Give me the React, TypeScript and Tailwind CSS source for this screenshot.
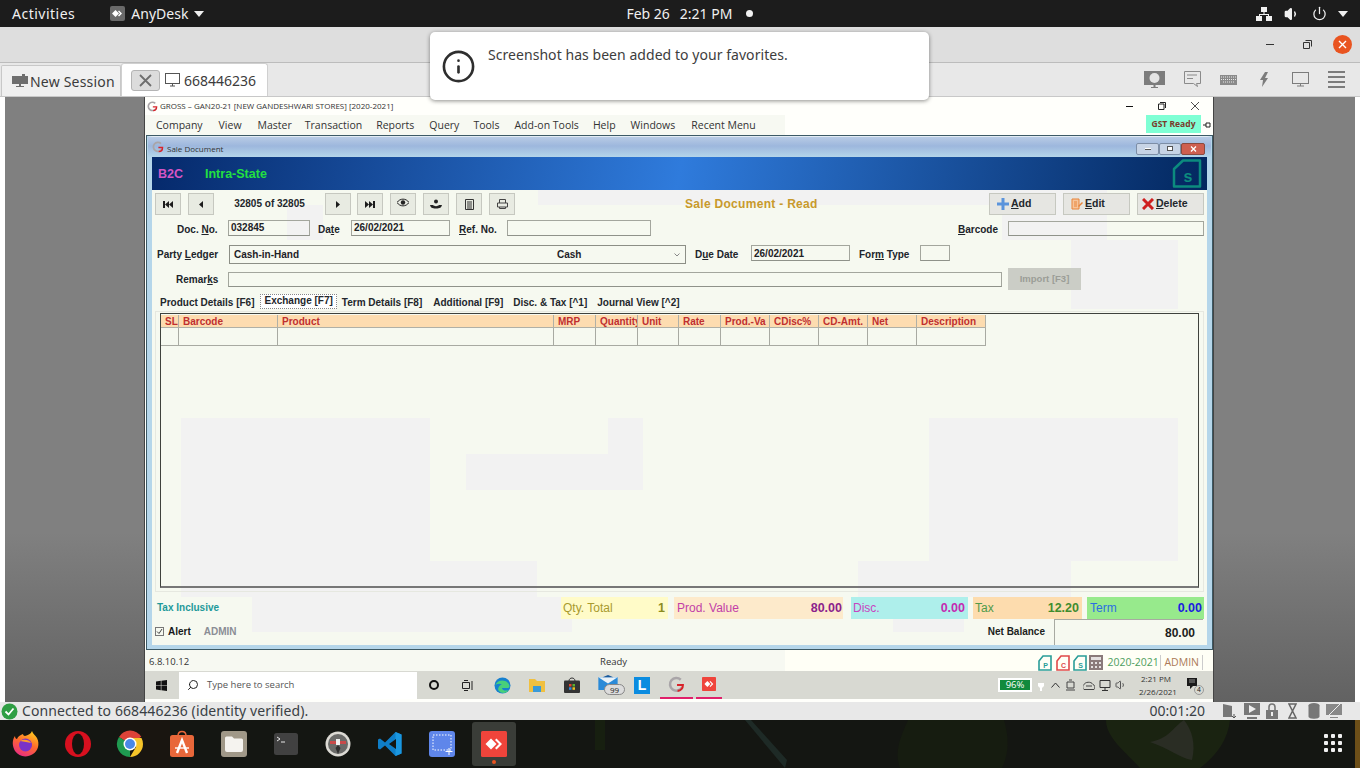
import React from "react";
import { Info, Volume1, Power, Search } from "lucide-react";

const U = ({ children }: { children: React.ReactNode }) => <span className="underline underline-offset-1">{children}</span>;

function Label({ w, children, ml = "" }: { w: string; children: React.ReactNode; ml?: string }) {
  return <div className={`${w} ${ml} shrink-0 text-[10px] font-bold text-[#20242a] whitespace-nowrap`}>{children}</div>;
}

function Field({ className, children }: { className: string; children?: React.ReactNode }) {
  return (
    <div className={`${className} shrink-0 border border-[#a3a69d] border-b-[#8f928a] text-[10px] font-bold text-[#1e2226] pl-[2px] leading-[13px] flex items-center`}>
      {children}
    </div>
  );
}

function NavBtn({ children }: { children: React.ReactNode }) {
  return <div className="w-[26px] h-[22px] shrink-0 bg-[#e8ebe2] border border-[#c6c8c0] flex items-center justify-center">{children}</div>;
}

const Tri = ({ d, w = 10 }: { d: string; w?: number }) => (
  <svg width={w} height="7" viewBox={`0 0 ${w} 7`}><path d={d} fill="#1c1c1c" /></svg>
);

function ActBtn({ icon, children, pad }: { icon: React.ReactNode; children: React.ReactNode; pad: string }) {
  return (
    <div className={`w-[67px] h-[22px] shrink-0 bg-[#e6e6e2] border border-[#c6c8c0] flex items-center ${pad} gap-[2px] text-[10.5px] font-bold text-[#23272c]`}>
      {icon}
      <span>{children}</span>
    </div>
  );
}

const cols: [string, string][] = [
  ["SL", "w-[18px]"],
  ["Barcode", "w-[99px]"],
  ["Product", "w-[276px]"],
  ["MRP", "w-[42px]"],
  ["Quantity", "w-[42px]"],
  ["Unit", "w-[41px]"],
  ["Rate", "w-[42px]"],
  ["Prod.-Va", "w-[49px]"],
  ["CDisc%", "w-[49px]"],
  ["CD-Amt.", "w-[49px]"],
  ["Net", "w-[49px]"],
  ["Description", "w-[69px]"],
];

function Total({ w, bg, label, value, lc, vc, mr, pad = "pl-[2px] pr-[3px]" }: { w: string; bg: string; label: string; value: string; lc: string; vc: string; mr: string; pad?: string }) {
  return (
    <div className={`${w} ${bg} ${mr} ${pad} h-[22px] shrink-0 flex items-center justify-between text-[12px]`}>
      <span className={lc}>{label}</span>
      <span className={`${vc} font-bold text-[12.5px]`}>{value}</span>
    </div>
  );
}

const Patch = ({ className }: { className: string }) => <div className={`absolute bg-[#f2f2f2] ${className}`} />;

function DocIcon({ color, letter }: { color: string; letter: string }) {
  return (
    <svg width="14" height="16" viewBox="0 0 14 16">
      <path d="M5 1h8v14H1V6z" fill="none" stroke={color} strokeWidth="1.6" />
      <text x="7.500" y="13" fontSize="7" fontWeight="bold" fill={color} textAnchor="middle" fontFamily="Liberation Sans">{letter}</text>
    </svg>
  );
}

function Firefox() {
  return (
    <svg width="28" height="28" viewBox="0 0 28 28">
      <defs>
        <linearGradient id="ff" x1="0.7" y1="0" x2="0.2" y2="1">
          <stop offset="0" stopColor="#ffc61e" />
          <stop offset="0.45" stopColor="#ff6b2c" />
          <stop offset="1" stopColor="#e8268a" />
        </linearGradient>
      </defs>
      <path d="M20 1c1 3 3 4 5 7 3 6 1 13-4 16-6 4-14 3-18-3C0 16 0 10 3 6c0 2 1 3 2 3 1-3 4-4 6-5 0 1 1 2 2 2 3-1 6-2 7-5z" fill="url(#ff)" />
      <circle cx="13.5" cy="15" r="6.5" fill="#7b32c8" />
      <path d="M8 11c3-2 9-2 11 2-3-1-7-1-11-2z" fill="#ff9a2e" />
    </svg>
  );
}

function Opera() {
  return (
    <svg width="28" height="28" viewBox="0 0 28 28">
      <circle cx="14" cy="14" r="13" fill="#d8101f" />
      <ellipse cx="14" cy="14" rx="6" ry="10.500" fill="#16140f" />
    </svg>
  );
}

function Chrome() {
  return (
    <svg width="28" height="28" viewBox="0 0 28 28">
      <path d="M14 14L3 7a13 13 0 0 1 22.3-.3z" fill="#dd4238" />
      <path d="M14 14v13A13 13 0 0 1 3 7z" fill="#1f9a50" />
      <path d="M14 8h11.5A13 13 0 0 1 27 14a13 13 0 0 1-13 13l6-10z" fill="#f6c429" />
      <circle cx="14" cy="14" r="6.5" fill="#fff" />
      <circle cx="14" cy="14" r="5" fill="#4a88e8" />
    </svg>
  );
}

function StoreIcon() {
  return (
    <svg width="26" height="28" viewBox="0 0 26 28">
      <path d="M9 6c0-6 8-6 8 0" fill="none" stroke="#e8673a" strokeWidth="1.5" />
      <rect x="1" y="5" width="24" height="22" rx="2.5" fill="#e8673a" />
      <path d="M8 23l5-13 5 13" fill="none" stroke="#fff" strokeWidth="2.4" />
      <path d="M6 18h14" stroke="#fff" strokeWidth="1.4" />
    </svg>
  );
}

function FilesIcon() {
  return (
    <svg width="26" height="26" viewBox="0 0 26 26">
      <rect width="26" height="26" rx="3" fill="#a09888" />
      <path d="M4 7a1.5 1.5 0 0 1 1.5-1.5H11l2 2h7.5A1.5 1.5 0 0 1 22 9v10a2 2 0 0 1-2 2H6a2 2 0 0 1-2-2z" fill="#f5f3ef" />
    </svg>
  );
}

function TermIcon() {
  return (
    <svg width="24" height="22" viewBox="0 0 24 22">
      <rect width="24" height="22" rx="2.5" fill="#414141" />
      <path d="M3 4l3 2-3 2M7 9h4" fill="none" stroke="#e8e8e8" strokeWidth="1" />
    </svg>
  );
}

function CompassIcon() {
  return (
    <svg width="26" height="26" viewBox="0 0 26 26">
      <circle cx="13" cy="13" r="12.5" fill="#dcdad4" />
      <circle cx="13" cy="13" r="10" fill="#6a6a68" />
      <path d="M5 10h16v3H5z" fill="#c94a4a" />
      <rect x="11" y="8" width="4" height="6" fill="#efefef" />
      <path d="M13 14l-2.5 3L13 23l2.5-6z" fill="#2f2f2f" />
    </svg>
  );
}

function VSCode() {
  return (
    <svg width="26" height="26" viewBox="0 0 26 26">
      <path d="M18.5 1L8 11.5 3 7.5 1 8.5v9l2 1 5-4 10.500 10.500 6-2.500V3.500zM19 8v10l-7-5z" fill="#0f7ec8" fillRule="evenodd" />
      <path d="M18.500 1l6 2.500v19l-6 2.500V18l.5 0V8l-.5 0z" fill="#1a97e0" />
    </svg>
  );
}

function ShotIcon() {
  return (
    <svg width="26" height="26" viewBox="0 0 26 26">
      <rect width="26" height="26" rx="3" fill="#5f86ea" />
      <rect x="4" y="4" width="18" height="15" fill="none" stroke="#fff" strokeWidth="1" strokeDasharray="1.500 1.500" />
      <path d="M20 17v7M16.500 20.500h7" stroke="#fff" strokeWidth="1" />
    </svg>
  );
}

function AnyDeskLogo({ size, bg }: { size: number; bg: string }) {
  return (
    <svg width={size} height={size} viewBox="0 0 26 26">
      <rect width="26" height="26" rx="1.500" fill={bg} />
      <path d="M10 7.500L15.500 13 10 18.500 4.500 13z" fill="#fff" />
      <path d="M15.500 7.500L21 13l-5.500 5.500-1.500-1.500 4-4-4-4z" fill="#fff" />
    </svg>
  );
}

function GLogo({ size }: { size: number }) {
  return (
    <svg width={size} height={size} viewBox="0 0 16 16">
      <path d="M12 3.500A6 6 0 1 0 13 11" fill="none" stroke="#a9a5a8" strokeWidth="2.400" />
      <path d="M8.500 8.500H14c0 3-2 5.500-5 5.500" fill="none" stroke="#d8232a" strokeWidth="2" />
    </svg>
  );
}

const SideGray = ({ className }: { className: string }) => (
  <div className={`${className} h-full shrink-0 border-[#444] bg-[linear-gradient(180deg,#808080_0%,#808080_72%,#626262_100%)]`} />
);

export default function App() {
  return (
    <div className="relative w-[1360px] h-[768px] overflow-hidden bg-[#14170f] font-['Noto_Sans',sans-serif] flex flex-col">
      {/* Ubuntu top bar */}
      <div className="h-[27px] shrink-0 bg-[#1c1c1c] flex items-center text-[#f0f0f0] text-[14px] relative">
        <span className="ml-[12px] tracking-[0.5px]">Activities</span>
        <div className="ml-[35px] w-[15px] h-[15px] rounded-[2px] bg-[#6a6a6a] flex items-center justify-center">
          <svg width="11" height="9" viewBox="0 0 11 9"><path d="M3.500 1L7 4.500 3.500 8 0 4.500z" fill="#fff" /><path d="M7 1.500L10 4.500 7 7.500 6 6.500l2-2-2-2z" fill="#fff" /></svg>
        </div>
        <span className="ml-[6px]">AnyDesk</span>
        <svg className="ml-[6px]" width="10" height="6" viewBox="0 0 10 6"><path d="M0 0h10L5 6z" fill="#f0f0f0" /></svg>
        <div className="ml-[422px] flex items-center">
          <span>Feb 26</span>
          <span className="ml-[10px]">2:21 PM</span>
          <span className="ml-[14px] w-[7px] h-[7px] rounded-full bg-[#f2f2f2]" />
        </div>
        <div className="ml-auto mr-[12px] flex items-center">
          <svg width="16" height="14" viewBox="0 0 16 14" fill="#f0f0f0"><rect x="5" y="0" width="6" height="5" /><rect x="0" y="9" width="6" height="5" /><rect x="10" y="9" width="6" height="5" /><path d="M7.500 5h1v2H13v2h-1V8H4v1H3V7h4.500z" /></svg>
          <Volume1 className="ml-[12px]" size={16} color="#f0f0f0" fill="#f0f0f0" />
          <Power className="ml-[12px]" size={15} color="#f0f0f0" />
          <svg className="ml-[11px]" width="10" height="6" viewBox="0 0 10 6"><path d="M0 0h10L5 6z" fill="#f0f0f0" /></svg>
        </div>
      </div>

      {/* AnyDesk title bar */}
      <div className="h-[36px] shrink-0 bg-[#dedede] border-b border-[#bcbcbc] flex items-center justify-end">
        <div className="w-[8px] h-[1px] bg-[#333]" />
        <svg className="ml-[29px]" width="9" height="9" viewBox="0 0 9 9"><path d="M2.500.500h6v6M.5 2.500h6v6h-6z" fill="none" stroke="#333" /></svg>
        <div className="ml-[21px] mr-[8px] w-[19px] h-[19px] rounded-full bg-[#e95420] flex items-center justify-center">
          <svg width="9" height="9" viewBox="0 0 9 9"><path d="M1 1l7 7M8 1l-7 7" stroke="#fff" strokeWidth="1.400" /></svg>
        </div>
      </div>

      {/* Tab bar */}
      <div className="h-[33px] shrink-0 bg-[#e8e8e8] flex items-end relative">
        <div className="ml-[1px] w-[120px] h-[31px] bg-[#f0f0f0] border border-[#c8c8c8] border-b-0 rounded-t-[2px] flex items-center pl-[10px] text-[14px] text-[#3c3c3c]">
          <svg width="16" height="14" viewBox="0 0 16 14"><path d="M0 2h10V0h3v2h3v8H9v2h3v1H4v-1h3v-2H0z" fill="#6e6e6e" /></svg>
          <span className="ml-[2px] tracking-[0.2px]">New Session</span>
        </div>
        <div className="w-[147px] h-[33px] bg-white border border-[#d0d0d0] border-b-0 rounded-t-[3px] flex items-center pl-[9px] text-[14px] text-[#3c3c3c]">
          <div className="w-[29px] h-[21px] rounded-[3px] bg-[#dcdcdc] border border-[#b4b4b4] flex items-center justify-center">
            <svg width="13" height="13" viewBox="0 0 13 13"><path d="M1 1l11 11M12 1L1 12" stroke="#6e6e6e" strokeWidth="1.800" /></svg>
          </div>
          <svg className="ml-[5px]" width="15" height="14" viewBox="0 0 15 14"><rect x="0.500" y="0.500" width="14" height="10" fill="none" stroke="#555" /><path d="M5 13h5M7.500 11v2" stroke="#555" /></svg>
          <span className="ml-[4px]">668446236</span>
        </div>
        <div className="ml-auto mr-[15px] h-[33px] flex items-center">
          <svg width="21" height="18" viewBox="0 0 21 18"><rect width="21" height="14" fill="#7c7c7c" /><circle cx="10.500" cy="7" r="5" fill="#e4e4e4" /><path d="M9.500 14h2v2H14v1H7v-1h2.500z" fill="#7c7c7c" /></svg>
          <svg className="ml-[19px]" width="17" height="17" viewBox="0 0 17 17"><path d="M.5.500h16v12h-4l1 3-4-3H.5z" fill="none" stroke="#8a8a8a" /><path d="M3 4h10M3 7.500h6" stroke="#8a8a8a" /></svg>
          <svg className="ml-[19px]" width="17" height="10" viewBox="0 0 17 10"><rect width="17" height="10" fill="#8a8a8a" /><path d="M1 2h15M1 4.500h15M3 7h11" stroke="#e8e8e8" strokeDasharray="1 1" /></svg>
          <svg className="ml-[22px]" width="10" height="15" viewBox="0 0 10 15"><path d="M6 0L1 8h3l-1 7 6-9H6l3-6z" fill="#7c7c7c" /></svg>
          <svg className="ml-[23px]" width="17" height="15" viewBox="0 0 17 15"><rect x=".5" y=".5" width="16" height="11" fill="none" stroke="#7c7c7c" /><path d="M8.500 12v2M5 14h7" stroke="#7c7c7c" /></svg>
          <div className="ml-[19px] w-[17px] flex flex-col gap-[3px]">
            <div className="h-[2px] bg-[#7c7c7c]" /><div className="h-[2px] bg-[#7c7c7c]" /><div className="h-[2px] bg-[#7c7c7c]" /><div className="h-[2px] bg-[#7c7c7c]" />
          </div>
        </div>
      </div>

      {/* Remote view */}
      <div className="h-[606px] shrink-0 bg-white flex border-t border-[#c8c8c8] px-[5px]">
        <SideGray className="w-[140px] border-r" />
        <div className="w-[1068px] shrink-0 h-full flex flex-col bg-[#fffffb] font-['Liberation_Sans',sans-serif]">
          <div className="h-[18px] shrink-0 flex items-center pl-[2px] text-[8px] text-[#333] font-['Open_Sans',sans-serif] relative">
            <GLogo size={11} />
            <span className="ml-[2px]">GROSS – GAN20-21 [NEW GANDESHWARI STORES] [2020-2021]</span>
            <div className="ml-auto flex items-center mr-[14px]">
              <div className="w-[7px] h-[1px] bg-[#111]" />
              <svg className="ml-[25px]" width="8" height="8" viewBox="0 0 8 8"><path d="M2 .5h5.500V6M.5 2h5.500v5.500H.5z" fill="none" stroke="#222" /></svg>
              <svg className="ml-[25px]" width="8" height="8" viewBox="0 0 8 8"><path d="M0 0l8 8M8 0L0 8" stroke="#222" strokeWidth=".8" /></svg>
            </div>
          </div>
          <div className="h-[20px] shrink-0 flex items-center text-[10.500px] text-[#333] font-['Open_Sans',sans-serif] bg-[linear-gradient(90deg,#f7f9f2_640px,#fffffb_640px)]">
            <span className="ml-[11px] mt-[2px]">Company</span>
            <span className="ml-[16px] mt-[2px]">View</span>
            <span className="ml-[16px] mt-[2px]">Master</span>
            <span className="ml-[13px] mt-[2px]">Transaction</span>
            <span className="ml-[14px] mt-[2px]">Reports</span>
            <span className="ml-[15px] mt-[2px]">Query</span>
            <span className="ml-[14px] mt-[2px]">Tools</span>
            <span className="ml-[15px] mt-[2px]">Add-on Tools</span>
            <span className="ml-[14px] mt-[2px]">Help</span>
            <span className="ml-[15px] mt-[2px]">Windows</span>
            <span className="ml-[16px] mt-[2px]">Recent Menu</span>
            <div className="ml-auto mb-[2px] w-[55px] h-[18px] bg-[#7fffd4] text-[#7a3a2a] text-[8.500px] font-bold flex items-center justify-center">GST Ready</div>
            <svg className="mx-[2px]" width="8" height="6" viewBox="0 0 8 6"><path d="M0 3h3M3 1h4v4H3z" fill="none" stroke="#222" /></svg>
          </div>

          {/* Sale document window */}
          <div className="h-[515px] shrink-0 ml-[1px] border border-[#3d5a66] flex flex-col">
            <div className="h-full border-t border-x-[5px] border-b-[4px] border-t-[#e2ecf4] border-x-[#b5d6ea] border-b-[#b5d6ea] bg-[#f6f9f0] relative flex flex-col">
              <Patch className="left-[386px] top-[53px] w-[569px] h-[15px]" />
              <Patch className="left-[135px] top-[68px] w-[36px] h-[35px]" />
              <Patch className="left-[850px] top-[68px] w-[105px] h-[35px]" />
              <Patch className="left-[919px] top-[103px] w-[107px] h-[69px]" />
              <Patch className="left-[29px] top-[281px] w-[249px] h-[143px]" />
              <Patch className="left-[29px] top-[424px] w-[356px] h-[36px]" />
              <Patch className="left-[100px] top-[460px] w-[320px] h-[35px]" />
              <Patch className="left-[314px] top-[317px] w-[177px] h-[36px]" />
              <Patch className="left-[456px] top-[281px] w-[35px] h-[36px]" />
              <Patch className="left-[777px] top-[281px] w-[249px] h-[143px]" />
              <Patch className="left-[706px] top-[424px] w-[213px] h-[36px]" />
              <Patch className="left-[741px] top-[481px] w-[71px] h-[14px]" />
              <div className="absolute left-[3px] top-[174px] w-[1049px] h-[281px] border border-[#e6e8e0]" />

              <div className="relative flex flex-col h-full">
                <div className="h-[20px] shrink-0 -mx-[4px] bg-[linear-gradient(180deg,#b8cbe5_0%,#9db7dd_45%,#b4d5ea_100%)] flex items-center pl-[4px] text-[8px] text-[#333] font-['Open_Sans',sans-serif]">
                  <GLogo size={12} />
                  <span className="ml-[3px] mt-[4px]">Sale Document</span>
                  <div className="ml-auto mr-[6px] mt-[3px] flex">
                    <div className="w-[23px] h-[12px] border border-[#7d8ea6] bg-[#c7d4e6] rounded-[2px] flex items-center justify-center"><div className="w-[6px] h-[2px] bg-white border-b border-[#555]" /></div>
                    <div className="w-[22px] h-[12px] border border-[#7d8ea6] bg-[#c7d4e6] rounded-[2px] flex items-center justify-center"><div className="w-[6px] h-[5px] border border-[#555] bg-white" /></div>
                    <div className="w-[24px] h-[12px] border border-[#8a4a40] bg-[#cf5f50] rounded-[2px] flex items-center justify-center">
                      <svg width="7" height="6" viewBox="0 0 7 6"><path d="M1 .5l5 5M6 .5l-5 5" stroke="#fff" strokeWidth="1.300" /></svg>
                    </div>
                  </div>
                </div>
                <div className="h-[33px] shrink-0 bg-[linear-gradient(100deg,#05296b_0%,#2f7bdc_50%,#03275f_100%)] flex items-center text-[12.500px] font-bold">
                  <span className="ml-[6px] mt-[1px] text-[#d455c4]">B2C</span>
                  <span className="ml-[22px] mt-[1px] text-[#22e040]">Intra-State</span>
                  <svg className="ml-auto mr-[5px]" width="30" height="29" viewBox="0 0 30 29">
                    <path d="M11 1.500h17v26H2V10z" fill="none" stroke="#0c8b7e" strokeWidth="2.500" strokeLinejoin="round" />
                    <text x="16" y="23" fontSize="16" fontWeight="bold" fill="#0c8b7e" textAnchor="middle" fontFamily="Liberation Sans">s</text>
                  </svg>
                </div>

                {/* Toolbar */}
                <div className="h-[28px] shrink-0 flex items-start pl-[3px] pt-[3px]">
                  <NavBtn><Tri w={10} d="M0 0h2v7H0zM6 0v7L2 3.500zM10 0v7L6 3.500z" /></NavBtn>
                  <div className="ml-[7px]"><NavBtn><Tri w={4} d="M4 0v7L0 3.500z" /></NavBtn></div>
                  <div className="w-[111px] h-[22px] leading-[22px] text-center text-[10px] font-bold text-[#23272c]">32805 of 32805</div>
                  <NavBtn><Tri w={4} d="M0 0v7l4-3.500z" /></NavBtn>
                  <div className="ml-[6px]"><NavBtn><Tri w={10} d="M0 0v7l4-3.500zM4 0v7l4-3.500zM8 0h2v7H8z" /></NavBtn></div>
                  <div className="ml-[7px]">
                    <NavBtn>
                      <svg className="-mt-[4px]" width="12" height="9" viewBox="0 0 12 9"><path d="M0 4.500C3 0 9 0 12 4.500 9 9 3 9 0 4.500z" fill="none" stroke="#222" /><circle cx="6" cy="4.500" r="2.200" fill="#222" /></svg>
                    </NavBtn>
                  </div>
                  <div className="ml-[7px]">
                    <NavBtn>
                      <svg width="12" height="10" viewBox="0 0 12 10"><circle cx="6" cy="2.500" r="2" fill="#222" /><path d="M0 6h3c1 1.500 5 1.500 6 0h3c-.5 2.500-2 3.500-6 3.500S.5 8.500 0 6z" fill="#222" /></svg>
                    </NavBtn>
                  </div>
                  <div className="ml-[7px]">
                    <NavBtn>
                      <svg width="9" height="11" viewBox="0 0 9 11"><path d="M.5.500h8v10h-8zM2 3h5M2 5h5M2 7h5M2 9h5" fill="none" stroke="#333" /></svg>
                    </NavBtn>
                  </div>
                  <div className="ml-[7px]">
                    <NavBtn>
                      <svg width="11" height="10" viewBox="0 0 11 10"><path d="M2.500 4V.5h6V4M.5 4h10v4h-10zM2.500 8v1.500h6V8" fill="none" stroke="#444" /></svg>
                    </NavBtn>
                  </div>
                  <div className="ml-[170px] w-[134px] h-[22px] leading-[23px] text-[12px] tracking-[0.3px] font-bold text-[#c89a2b] whitespace-nowrap">Sale Document - Read</div>
                  <div className="ml-auto flex mr-[3px]">
                    <ActBtn pad="pl-[7px]" icon={<svg width="12" height="12" viewBox="0 0 12 12"><path d="M4.500 0h3v4.500H12v3H7.500V12h-3V7.500H0v-3h4.500z" fill="#5b94dc" /></svg>}><U>A</U>dd</ActBtn>
                    <div className="ml-[7px]">
                      <ActBtn pad="pl-[7px]" icon={<svg width="12" height="12" viewBox="0 0 12 12"><path d="M1 1h7v10H1zM3 4h3M3 6h3M3 8h3" fill="#f6c49a" stroke="#e8843a" /><path d="M7 8l4-4 1 1-4 4z" fill="#e8843a" /></svg>}><U>E</U>dit</ActBtn>
                    </div>
                    <div className="ml-[7px]">
                      <ActBtn pad="pl-[4px]" icon={<svg width="12" height="12" viewBox="0 0 12 12"><path d="M1 1l10 10M11 1L1 11" stroke="#cf1f1f" strokeWidth="3" /></svg>}><U>D</U>elete</ActBtn>
                    </div>
                  </div>
                </div>

                {/* Doc row */}
                <div className="h-[16px] mt-[2px] shrink-0 flex items-center">
                  <Label w="w-[42px]" ml="ml-[25px] mt-[2px]">Doc. <U>N</U>o.</Label>
                  <Field className="ml-[9px] w-[82px] h-[16px] pb-[2px]">032845</Field>
                  <Label w="w-[24px]" ml="ml-[8px] mt-[2px]">Da<U>t</U>e</Label>
                  <Field className="ml-[9px] w-[99px] h-[16px] pb-[2px]">26/02/2021</Field>
                  <Label w="w-[40px]" ml="ml-[9px] mt-[2px]"><U>R</U>ef. No.</Label>
                  <Field className="ml-[8px] w-[144px] h-[16px]" />
                  <Label w="w-[42px]" ml="ml-[307px] mt-[2px]"><U>B</U>arcode</Label>
                  <Field className="ml-[8px] w-[196px] h-[15px]" />
                </div>

                {/* Party row */}
                <div className="h-[19px] mt-[9px] shrink-0 flex items-center">
                  <Label w="w-[64px]" ml="ml-[5px]">Party <U>L</U>edger</Label>
                  <div className="ml-[8px] w-[457px] h-[19px] shrink-0 border border-[#8c8f86] flex items-center text-[10px] font-bold text-[#1e2226] pl-[4px] relative">
                    <span>Cash-in-Hand</span>
                    <span className="ml-[258px]">Cash</span>
                    <svg className="ml-auto mr-[5px]" width="6" height="4" viewBox="0 0 6 4"><path d="M.5.500L3 3 5.500.500" fill="none" stroke="#888" /></svg>
                  </div>
                  <Label w="w-[47px]" ml="ml-[9px]">D<U>u</U>e Date</Label>
                  <Field className="ml-[9px] -mt-[3px] w-[99px] h-[16px]">26/02/2021</Field>
                  <Label w="w-[54px]" ml="ml-[9px]">For<U>m</U> Type</Label>
                  <Field className="ml-[7px] -mt-[3px] w-[30px] h-[16px]" />
                </div>

                {/* Remarks row */}
                <div className="h-[22px] mt-[4px] shrink-0 flex items-center">
                  <Label w="w-[44px]" ml="ml-[24px]">Remar<U>k</U>s</Label>
                  <Field className="ml-[8px] w-[774px] h-[15px]" />
                  <div className="ml-[6px] w-[73px] h-[22px] bg-[#cbcdc6] text-[#9b9d97] text-[9.500px] font-bold flex items-center justify-center">Import [F3]</div>
                </div>

                {/* Tabs */}
                <div className="h-[17px] mt-[4px] shrink-0 flex items-center pl-[8px] text-[10px] font-bold text-[#23272c] whitespace-nowrap">
                  <span>Product Details [F6]</span>
                  <span className="ml-[6px] bg-white border border-dotted border-[#888] px-[3px] h-[15px] -mt-[2px] leading-[12px]">Exchange [F7]</span>
                  <span className="ml-[5px]">Term Details [F8]</span>
                  <span className="ml-[11px]">Additional [F9]</span>
                  <span className="ml-[10px]">Disc. &amp; Tax [^1]</span>
                  <span className="ml-[10px]">Journal View [^2]</span>
                </div>

                {/* Grid */}
                <div className="mt-[2px] ml-[8px] mr-[8px] h-[275px] shrink-0 border border-[#3f423d] border-b-2 border-b-[#777] pt-[1px] overflow-hidden">
                  <div className="flex h-[13px]">
                    {cols.map(([name, w]) => (
                      <div key={name} className={`${w} shrink-0 bg-[#fddcb0] border-r border-[#b0b0a6] border-b text-[10px] font-bold text-[#c02f2f] pl-[4px] leading-[14px] overflow-hidden whitespace-nowrap`}>
                        {name}
                      </div>
                    ))}
                  </div>
                  <div className="flex h-[18px]">
                    {cols.map(([name, w]) => (
                      <div key={name} className={`${w} shrink-0 border-r border-b border-[#a8aaa2]`} />
                    ))}
                  </div>
                </div>

                {/* Totals */}
                <div className="h-[22px] mt-[9px] shrink-0 flex items-center">
                  <span className="ml-[5px] -mt-[2px] text-[10px] font-bold text-[#1f9a9a]">Tax Inclusive</span>
                  <div className="ml-auto flex mr-[3px]">
                    <Total w="w-[107px]" bg="bg-[#fffbc8]" mr="mr-[6px]" label="Qty. Total" value="1" lc="text-[#a89a2e]" vc="text-[#8c8c1f]" />
                    <Total w="w-[169px]" bg="bg-[#fdeacb]" mr="mr-[8px]" pad="pl-[3px] pr-[1px]" label="Prod. Value" value="80.00" lc="text-[#c23ea8]" vc="text-[#8c1f8c]" />
                    <Total w="w-[117px]" bg="bg-[#aeefeb]" mr="mr-[5px]" label="Disc." value="0.00" lc="text-[#c844c0]" vc="text-[#c42ab0]" />
                    <Total w="w-[109px]" bg="bg-[#fddcae]" mr="mr-[5px]" label="Tax" value="12.20" lc="text-[#4f9a4a]" vc="text-[#3f8c2e]" />
                    <Total w="w-[117px]" bg="bg-[#97ea8c]" mr="" pad="pl-[3px] pr-[2px]" label="Term" value="0.00" lc="text-[#2b6fe0]" vc="text-[#1c1ce0]" />
                  </div>
                </div>

                {/* Bottom */}
                <div className="h-[26px] shrink-0 flex items-center">
                  <div className="ml-[3px] -mt-[2px] w-[9px] h-[9px] border border-[#777] flex items-center justify-center">
                    <svg width="7" height="7" viewBox="0 0 7 7"><path d="M1 3.500L3 5.500 6 1" fill="none" stroke="#444" /></svg>
                  </div>
                  <span className="ml-[4px] -mt-[2px] text-[10px] font-bold text-[#16181a]">Alert</span>
                  <span className="ml-[13px] -mt-[2px] text-[10px] font-bold text-[#8a8d95]">ADMIN</span>
                  <span className="ml-auto -mt-[2px] text-[10px] font-bold text-[#1c1e20]">Net Balance</span>
                  <div className="ml-[9px] mr-[4px] w-[149px] h-[26px] border-l border-t border-[#a8aaa2] flex items-center justify-end pr-[8px] text-[12px] font-bold text-[#1c1e20]">80.00</div>
                </div>
              </div>
            </div>
          </div>

          {/* App status */}
          <div className="h-[21px] shrink-0 flex items-center pt-[4px] text-[9.500px] text-[#333] font-['Open_Sans',sans-serif] bg-[linear-gradient(90deg,#f7f9f2_640px,#fffff6_640px)]">
            <span className="ml-[4px]">6.8.10.12</span>
            <span className="ml-[411px]">Ready</span>
            <div className="ml-auto mr-[10px] flex items-center">
              <DocIcon color="#2a9d98" letter="P" />
              <span className="ml-[4px]"><DocIcon color="#e04a4a" letter="C" /></span>
              <span className="ml-[3px]"><DocIcon color="#2a9d98" letter="S" /></span>
              <svg className="ml-[2px]" width="14" height="15" viewBox="0 0 14 15"><rect width="14" height="15" fill="#8a7a7a" /><rect x="2" y="2" width="10" height="3" fill="#e4e0e0" /><path d="M2 7h2v2H2zM6 7h2v2H6zM10 7h2v2h-2zM2 11h2v2H2zM6 11h2v2H6zM10 11h2v2h-2z" fill="#e4e0e0" /></svg>
              <span className="ml-[4px] text-[#4e9e5e] text-[10.500px] w-[54px] border-r border-[#ccc]">2020-2021</span>
              <span className="ml-[3px] text-[#ab7a58] text-[10.500px] pr-[3px] border-r border-[#ccc]">ADMIN</span>
            </div>
          </div>

          {/* Windows taskbar */}
          <div className="h-[28px] shrink-0 bg-[#d8d9d2] flex items-center relative">
            <svg className="ml-[11px]" width="11" height="11" viewBox="0 0 11 11" fill="#111"><path d="M0 1.500L4.800.8v4.400H0zM5.400.7L11 0v5.200H5.400zM0 5.800h4.800v4.400L0 9.500zM5.400 5.800H11V11l-5.600-.8z" /></svg>
            <div className="ml-[12px] w-[238px] h-[27px] bg-white flex items-center pl-[8px] text-[9.500px] text-[#555] font-['Open_Sans',sans-serif]">
              <Search size={12} color="#222" className="-scale-x-100" />
              <span className="ml-[8px]">Type here to search</span>
            </div>
            <div className="ml-[12px] w-[10px] h-[10px] rounded-full border-2 border-[#111]" />
            <svg className="ml-[23px]" width="12" height="11" viewBox="0 0 12 11"><path d="M.5 2.500h7v6h-7zM2 .5h4M2 10.500h4M10 1v9" fill="none" stroke="#222" /></svg>
            <svg className="ml-[20px]" width="17" height="17" viewBox="0 0 17 17"><circle cx="8.500" cy="8.500" r="8" fill="#1680cf" /><path d="M1 9c2-6 9-7 13-3 2 2 2 5 0 5H8c0 2 3 3.500 7 2-3 4-8 3.500-10 1C3 12 5 8 8 7.500 5 6 2 7 1 9z" fill="#48d07a" /></svg>
            <svg className="ml-[18px]" width="16" height="14" viewBox="0 0 16 14"><path d="M0 1h6l2 2h8v11H0z" fill="#f0c040" /><rect x="4" y="8" width="8" height="6" fill="#3a9ad8" /></svg>
            <svg className="ml-[19px]" width="16" height="16" viewBox="0 0 16 16"><path d="M5 4c0-4 6-4 6 0" fill="none" stroke="#333" /><rect y="3.500" width="16" height="12.500" rx="1" fill="#333" /><rect x="5" y="7" width="2.500" height="2.500" fill="#e8442a" /><rect x="8.500" y="7" width="2.500" height="2.500" fill="#5ab030" /><rect x="5" y="10.300" width="2.500" height="2.500" fill="#2a8ae0" /><rect x="8.500" y="10.300" width="2.500" height="2.500" fill="#f0c020" /></svg>
            <div className="ml-[18px] relative w-[27px] h-[20px]">
              <svg width="20" height="15" viewBox="0 0 18 14"><rect y="2" width="18" height="12" fill="#2a8ad8" /><path d="M0 2l9 6 9-6" fill="#eaf2f8" /><path d="M4 2l5-2 5 2" fill="#1a5a9c" /></svg>
              <div className="absolute right-0 bottom-0 w-[21px] h-[11px] rounded-full border border-[#888] bg-[#dcdcdc] text-[8px] leading-[9px] text-center text-[#222] font-['Open_Sans',sans-serif]">99</div>
            </div>
            <div className="ml-[9px] w-[16px] h-[17px] bg-[#0b8ce0] flex items-center justify-center text-white text-[14px] font-bold">L</div>
            <div className="ml-[10px] w-[33px] h-[28px] flex items-center justify-center border-b-2 border-[#e0206a]"><GLogo size={17} /></div>
            <div className="ml-[3px] w-[26px] h-[28px] flex items-center justify-center border-b-2 border-[#e0206a]"><AnyDeskLogo size={14} bg="#ef443b" /></div>
            <div className="ml-[276px] w-[34px] h-[14px] bg-[#118a3c] border-2 border-white text-white text-[9.500px] leading-[10px] text-center font-['Open_Sans',sans-serif]">96%</div>
            <svg className="ml-[6px]" width="6" height="11" viewBox="0 0 6 11"><path d="M1 0v3M5 0v3M0 3h6v3L4 8v3H2V8L0 6z" fill="#fff" /></svg>
            <svg className="ml-[7px]" width="9" height="6" viewBox="0 0 9 6"><path d="M.5 5.500L4.500 1l4 4.500" fill="none" stroke="#333" /></svg>
            <svg className="ml-[6px]" width="9" height="12" viewBox="0 0 9 12"><path d="M1 3h7v6H1zM3 1h3M0 11h9" fill="none" stroke="#444" /></svg>
            <svg className="ml-[8px]" width="12" height="9" viewBox="0 0 12 9"><path d="M1 8.500a3 3 0 0 1 0-5C2 1 8 0 10 3.500a3 3 0 0 1 1 5z" fill="none" stroke="#444" /><path d="M3 5h6" stroke="#444" /></svg>
            <svg className="ml-[4px]" width="12" height="11" viewBox="0 0 12 11"><path d="M1 .5h10v7H1zM6 8v2M3 10.500h6" fill="none" stroke="#333" /></svg>
            <Volume1 className="ml-[4px]" size={12} color="#555" />
            <div className="ml-[12px] w-[34px] text-center text-[8px] leading-[13px] text-[#333] font-['Open_Sans',sans-serif] whitespace-nowrap">
              <div>2:21 PM</div>
              <div>2/26/2021</div>
            </div>
            <div className="ml-[14px] relative w-[14px] h-[14px]">
              <svg width="10" height="11" viewBox="0 0 10 11"><path d="M0 0h10v8H6l-3 3V8H0z" fill="#1a1a1a" /><path d="M2 2h6M2 4h6" stroke="#ddd" strokeWidth=".6" /></svg>
              <div className="absolute right-[-3px] bottom-[-3px] w-[10px] h-[10px] rounded-full border border-[#999] bg-[#d8d9d2] text-[7px] leading-[8px] text-center text-[#222]">4</div>
            </div>
          </div>
        </div>
        <SideGray className="w-[142px] border-l" />
      </div>

      {/* Connection status */}
      <div className="h-[18px] shrink-0 bg-[#e8e8e8] flex items-center text-[#3a3f45] text-[14px]">
        <svg className="ml-[1px]" width="17" height="17" viewBox="0 0 17 17"><circle cx="8.500" cy="8.500" r="8" fill="#2f9e44" /><path d="M4.500 8.500l3 3 5-6" fill="none" stroke="#fff" strokeWidth="1.800" /></svg>
        <span className="ml-[4px] -mt-[2px] tracking-[0.1px]">Connected to 668446236 (identity verified).</span>
        <span className="ml-auto -mt-[1px] text-[14px]">00:01:20</span>
        <div className="ml-[18px] mr-[18px] flex items-center">
          <svg width="14" height="16" viewBox="0 0 14 16"><path d="M0 1l9 2v11H0z" fill="#777" /><path d="M11 11v4M9 13l2 2 2-2" fill="none" stroke="#555" /></svg>
          <svg className="ml-[6px]" width="18" height="16" viewBox="0 0 16 16"><rect width="16" height="12" fill="#777" /><path d="M5 2l7 4-7 4z" fill="#eee" /><path d="M3 15h10" stroke="#777" strokeWidth="2" /></svg>
          <svg className="ml-[5px]" width="12" height="16" viewBox="0 0 12 16"><path d="M3 7V4a3 3 0 0 1 6 0v3" fill="none" stroke="#777" strokeWidth="1.600" /><rect y="7" width="12" height="9" fill="#777" /><rect x="5" y="9" width="2" height="4" fill="#eee" /></svg>
          <svg className="ml-[10px]" width="9" height="16" viewBox="0 0 9 16"><path d="M1 1h7L1 15h7z" fill="none" stroke="#666" strokeWidth="1.500" /></svg>
          <svg className="ml-[11px]" width="12" height="16" viewBox="0 0 12 16"><ellipse cx="6" cy="2.500" rx="5.500" ry="2.500" fill="#777" /><path d="M.5 2.500v11c0 3 11 3 11 0v-11z" fill="#777" /></svg>
          <svg className="ml-[6px]" width="16" height="16" viewBox="0 0 16 16"><rect y="1" width="16" height="11" fill="#888" /><path d="M3 14h10M14 1L3 12" stroke="#eee" /><path d="M4 14.500h8" stroke="#888" /></svg>
        </div>
      </div>

      {/* Dock */}
      <div className="h-[48px] shrink-0 relative bg-[#141612] flex items-center">
        <svg className="absolute inset-0" width="1360" height="48" viewBox="0 0 1360 48">
          <rect x="120" y="0" width="50" height="48" fill="#191510" />
          <rect x="595" y="0" width="10" height="30" fill="#171f10" />
          <path d="M745 0l6 0 36 40-2 8z" fill="#1e2a26" />
          <path d="M900 48c-6-16 0-30 8-48h96c6 20 4 36-2 48z" fill="#161c10" />
          <path d="M1106 0h124c-2 20-14 36-30 48h-60c-14-16-34-30-34-48z" fill="#1a2311" />
          <path d="M1150 22c20-4 22-14 34-22 8 10 12 24 8 40-12-2-24-12-42-18z" fill="#2a2d24" />
          <rect x="1355" y="0" width="5" height="48" fill="#6d4f18" />
        </svg>
        <div className="relative ml-[12px] w-[28px] flex justify-center"><Firefox /></div>
        <div className="relative ml-[24px] w-[28px] flex justify-center"><Opera /></div>
        <div className="relative ml-[24px] w-[28px] flex justify-center"><Chrome /></div>
        <div className="relative ml-[24px] w-[28px] flex justify-center"><StoreIcon /></div>
        <div className="relative ml-[24px] w-[28px] flex justify-center"><FilesIcon /></div>
        <div className="relative ml-[24px] w-[28px] flex justify-center"><TermIcon /></div>
        <div className="relative ml-[24px] w-[28px] flex justify-center"><CompassIcon /></div>
        <div className="relative ml-[24px] w-[28px] flex justify-center"><VSCode /></div>
        <div className="relative ml-[24px] w-[28px] flex justify-center"><ShotIcon /></div>
        <div className="ml-[16px] w-[44px] h-[44px] rounded-[3px] bg-[#3a3d38] relative flex items-center justify-center">
          <AnyDeskLogo size={26} bg="#ef443b" />
          <div className="absolute bottom-[2px] left-[20px] w-[4px] h-[4px] rounded-full bg-[#e95420]" />
        </div>
        <div className="relative ml-auto mr-[18px] grid grid-cols-3 gap-[3px] -mt-[2px]">
          {Array.from({ length: 9 }).map((_, i) => (
            <div key={i} className="w-[4px] h-[4px] rounded-[1px] bg-[#f0f0f0]" />
          ))}
        </div>
      </div>

      {/* Notification */}
      <div className="absolute left-[430px] top-[32px] w-[499px] h-[68px] bg-white rounded-[5px] shadow-[0_1px_4px_rgba(0,0,0,0.45)] flex items-center">
        <Info className="ml-[11px]" size={35} color="#2e2e2e" strokeWidth={1.800} />
        <span className="ml-[12px] -mt-[23px] text-[14px] text-[#3d3d3d] tracking-[0.05px]">Screenshot has been added to your favorites.</span>
      </div>
    </div>
  );
}
